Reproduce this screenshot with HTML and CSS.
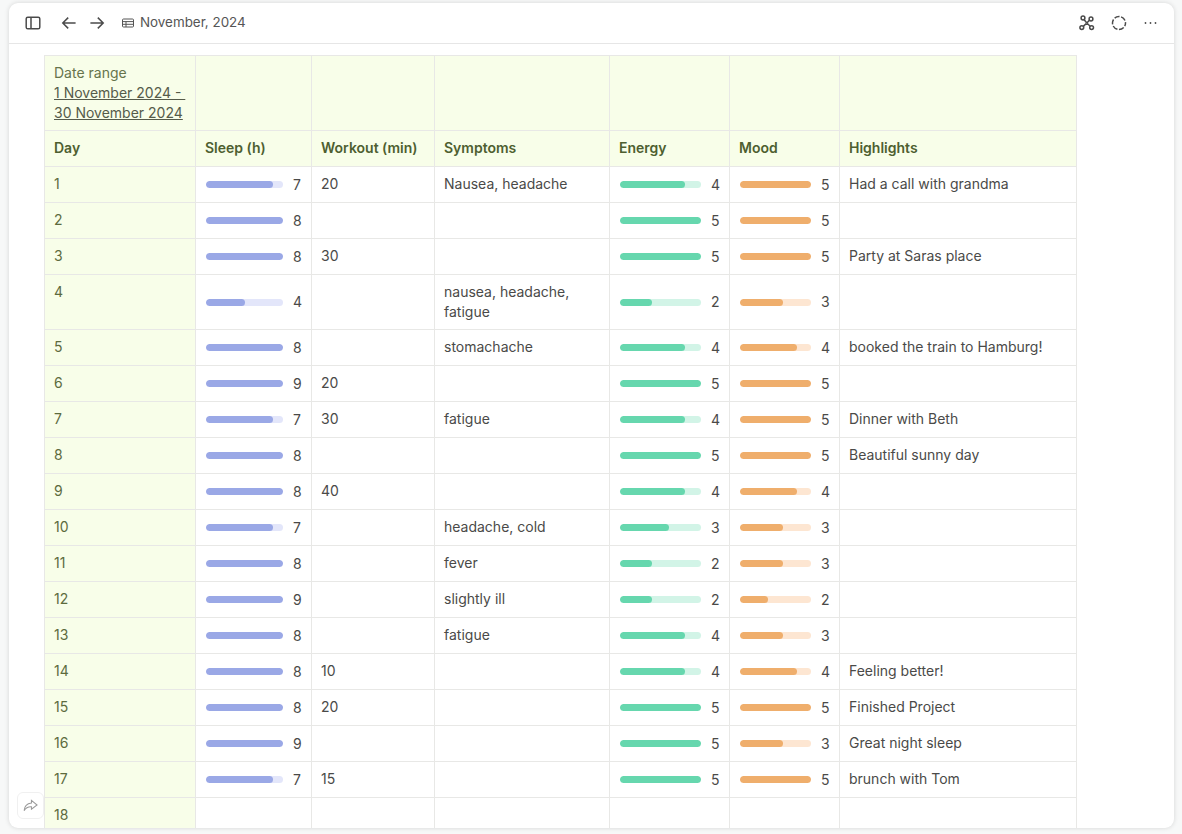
FILE: index.html
```html
<!DOCTYPE html>
<html lang="en">
<head>
  <meta charset="UTF-8">
  <title>November, 2024</title>
  <link rel="stylesheet" href="styles.css">
</head>
<body>
  <div class="card">
    <!-- Top bar -->
    <div class="topbar">
      <div class="topbar-left">
        <svg class="icon side-icon" viewBox="0 0 16 16"><rect x="1.2" y="2.2" width="13.6" height="11.6" rx="1.6"/><path d="M6 2.2v11.6"/></svg>
        <svg class="icon back-icon" viewBox="0 0 16 16"><path d="M14.6 8H1.8M7.2 2.6 1.8 8l5.4 5.4"/></svg>
        <svg class="icon fwd-icon" viewBox="0 0 16 16"><path d="M1.4 8h12.8M8.8 2.6 14.2 8l-5.4 5.4"/></svg>
        <svg class="small-icon" viewBox="0 0 12 10"><rect x="0.5" y="1" width="11" height="8" rx="1"/><path d="M0.5 3.6h11M0.5 6.3h11M4 3.6V9"/></svg>
        <span class="page-title">November, 2024</span>
      </div>
      <div class="topbar-right">
        <svg class="icon" viewBox="0 0 16 16"><circle cx="4" cy="3" r="1.9"/><circle cx="12" cy="4" r="1.9"/><circle cx="2.8" cy="12.6" r="1.9"/><circle cx="12.6" cy="12.6" r="1.9"/><path d="M5 4.6 7.8 8M10.4 5.2 7.8 8M4.3 11.4 7.8 8M11.2 11.2 7.8 8"/></svg>
        <svg class="icon" viewBox="0 0 16 16"><circle cx="8" cy="8" r="6.5" stroke-dasharray="5.2 1.6" stroke-dashoffset="2"/></svg>
        <svg class="icon" viewBox="0 0 16 16"><circle class="dot" cx="2.5" cy="8" r="0.9"/><circle class="dot" cx="7.5" cy="8" r="0.9"/><circle class="dot" cx="12.5" cy="8" r="0.9"/></svg>
      </div>
    </div>

    <!-- Tracker table -->
    <div class="content">
      <table class="tracker">
        <colgroup>
          <col class="col-day"><col class="col-sleep"><col class="col-workout"><col class="col-symptoms"><col class="col-energy"><col class="col-mood"><col class="col-high">
        </colgroup>
        <tr class="head">
          <td>Date range<br><span class="range">1 November 2024 -&nbsp;<br>30 November 2024</span></td>
          <td></td><td></td><td></td><td></td><td></td><td></td>
        </tr>
        <tr class="head titles">
          <td>Day</td><td>Sleep (h)</td><td>Workout (min)</td><td>Symptoms</td><td>Energy</td><td>Mood</td><td>Highlights</td>
        </tr>
        <tr>
          <td class="day">1</td>
          <td class="mid"><div class="meter sleep"><div class="track"><div class="fill" style="width:87.5%"></div></div><span>7</span></div></td>
          <td>20</td><td>Nausea, headache</td>
          <td class="mid"><div class="meter energy"><div class="track"><div class="fill" style="width:80%"></div></div><span>4</span></div></td>
          <td class="mid"><div class="meter mood"><div class="track"><div class="fill" style="width:100%"></div></div><span>5</span></div></td>
          <td>Had a call with grandma</td>
        </tr>
        <tr>
          <td class="day">2</td>
          <td class="mid"><div class="meter sleep"><div class="track"><div class="fill" style="width:100%"></div></div><span>8</span></div></td>
          <td></td><td></td>
          <td class="mid"><div class="meter energy"><div class="track"><div class="fill" style="width:100%"></div></div><span>5</span></div></td>
          <td class="mid"><div class="meter mood"><div class="track"><div class="fill" style="width:100%"></div></div><span>5</span></div></td>
          <td></td>
        </tr>
        <tr>
          <td class="day">3</td>
          <td class="mid"><div class="meter sleep"><div class="track"><div class="fill" style="width:100%"></div></div><span>8</span></div></td>
          <td>30</td><td></td>
          <td class="mid"><div class="meter energy"><div class="track"><div class="fill" style="width:100%"></div></div><span>5</span></div></td>
          <td class="mid"><div class="meter mood"><div class="track"><div class="fill" style="width:100%"></div></div><span>5</span></div></td>
          <td>Party at Saras place</td>
        </tr>
        <tr>
          <td class="day">4</td>
          <td class="mid"><div class="meter sleep"><div class="track"><div class="fill" style="width:50%"></div></div><span>4</span></div></td>
          <td></td><td>nausea, headache, fatigue</td>
          <td class="mid"><div class="meter energy"><div class="track"><div class="fill" style="width:40%"></div></div><span>2</span></div></td>
          <td class="mid"><div class="meter mood"><div class="track"><div class="fill" style="width:60%"></div></div><span>3</span></div></td>
          <td></td>
        </tr>
        <tr>
          <td class="day">5</td>
          <td class="mid"><div class="meter sleep"><div class="track"><div class="fill" style="width:100%"></div></div><span>8</span></div></td>
          <td></td><td>stomachache</td>
          <td class="mid"><div class="meter energy"><div class="track"><div class="fill" style="width:80%"></div></div><span>4</span></div></td>
          <td class="mid"><div class="meter mood"><div class="track"><div class="fill" style="width:80%"></div></div><span>4</span></div></td>
          <td>booked the train to Hamburg!</td>
        </tr>
        <tr>
          <td class="day">6</td>
          <td class="mid"><div class="meter sleep"><div class="track"><div class="fill" style="width:100%"></div></div><span>9</span></div></td>
          <td>20</td><td></td>
          <td class="mid"><div class="meter energy"><div class="track"><div class="fill" style="width:100%"></div></div><span>5</span></div></td>
          <td class="mid"><div class="meter mood"><div class="track"><div class="fill" style="width:100%"></div></div><span>5</span></div></td>
          <td></td>
        </tr>
        <tr>
          <td class="day">7</td>
          <td class="mid"><div class="meter sleep"><div class="track"><div class="fill" style="width:87.5%"></div></div><span>7</span></div></td>
          <td>30</td><td>fatigue</td>
          <td class="mid"><div class="meter energy"><div class="track"><div class="fill" style="width:80%"></div></div><span>4</span></div></td>
          <td class="mid"><div class="meter mood"><div class="track"><div class="fill" style="width:100%"></div></div><span>5</span></div></td>
          <td>Dinner with Beth</td>
        </tr>
        <tr>
          <td class="day">8</td>
          <td class="mid"><div class="meter sleep"><div class="track"><div class="fill" style="width:100%"></div></div><span>8</span></div></td>
          <td></td><td></td>
          <td class="mid"><div class="meter energy"><div class="track"><div class="fill" style="width:100%"></div></div><span>5</span></div></td>
          <td class="mid"><div class="meter mood"><div class="track"><div class="fill" style="width:100%"></div></div><span>5</span></div></td>
          <td>Beautiful sunny day</td>
        </tr>
        <tr>
          <td class="day">9</td>
          <td class="mid"><div class="meter sleep"><div class="track"><div class="fill" style="width:100%"></div></div><span>8</span></div></td>
          <td>40</td><td></td>
          <td class="mid"><div class="meter energy"><div class="track"><div class="fill" style="width:80%"></div></div><span>4</span></div></td>
          <td class="mid"><div class="meter mood"><div class="track"><div class="fill" style="width:80%"></div></div><span>4</span></div></td>
          <td></td>
        </tr>
        <tr>
          <td class="day">10</td>
          <td class="mid"><div class="meter sleep"><div class="track"><div class="fill" style="width:87.5%"></div></div><span>7</span></div></td>
          <td></td><td>headache, cold</td>
          <td class="mid"><div class="meter energy"><div class="track"><div class="fill" style="width:60%"></div></div><span>3</span></div></td>
          <td class="mid"><div class="meter mood"><div class="track"><div class="fill" style="width:60%"></div></div><span>3</span></div></td>
          <td></td>
        </tr>
        <tr>
          <td class="day">11</td>
          <td class="mid"><div class="meter sleep"><div class="track"><div class="fill" style="width:100%"></div></div><span>8</span></div></td>
          <td></td><td>fever</td>
          <td class="mid"><div class="meter energy"><div class="track"><div class="fill" style="width:40%"></div></div><span>2</span></div></td>
          <td class="mid"><div class="meter mood"><div class="track"><div class="fill" style="width:60%"></div></div><span>3</span></div></td>
          <td></td>
        </tr>
        <tr>
          <td class="day">12</td>
          <td class="mid"><div class="meter sleep"><div class="track"><div class="fill" style="width:100%"></div></div><span>9</span></div></td>
          <td></td><td>slightly ill</td>
          <td class="mid"><div class="meter energy"><div class="track"><div class="fill" style="width:40%"></div></div><span>2</span></div></td>
          <td class="mid"><div class="meter mood"><div class="track"><div class="fill" style="width:40%"></div></div><span>2</span></div></td>
          <td></td>
        </tr>
        <tr>
          <td class="day">13</td>
          <td class="mid"><div class="meter sleep"><div class="track"><div class="fill" style="width:100%"></div></div><span>8</span></div></td>
          <td></td><td>fatigue</td>
          <td class="mid"><div class="meter energy"><div class="track"><div class="fill" style="width:80%"></div></div><span>4</span></div></td>
          <td class="mid"><div class="meter mood"><div class="track"><div class="fill" style="width:60%"></div></div><span>3</span></div></td>
          <td></td>
        </tr>
        <tr>
          <td class="day">14</td>
          <td class="mid"><div class="meter sleep"><div class="track"><div class="fill" style="width:100%"></div></div><span>8</span></div></td>
          <td>10</td><td></td>
          <td class="mid"><div class="meter energy"><div class="track"><div class="fill" style="width:80%"></div></div><span>4</span></div></td>
          <td class="mid"><div class="meter mood"><div class="track"><div class="fill" style="width:80%"></div></div><span>4</span></div></td>
          <td>Feeling better!</td>
        </tr>
        <tr>
          <td class="day">15</td>
          <td class="mid"><div class="meter sleep"><div class="track"><div class="fill" style="width:100%"></div></div><span>8</span></div></td>
          <td>20</td><td></td>
          <td class="mid"><div class="meter energy"><div class="track"><div class="fill" style="width:100%"></div></div><span>5</span></div></td>
          <td class="mid"><div class="meter mood"><div class="track"><div class="fill" style="width:100%"></div></div><span>5</span></div></td>
          <td>Finished Project</td>
        </tr>
        <tr>
          <td class="day">16</td>
          <td class="mid"><div class="meter sleep"><div class="track"><div class="fill" style="width:100%"></div></div><span>9</span></div></td>
          <td></td><td></td>
          <td class="mid"><div class="meter energy"><div class="track"><div class="fill" style="width:100%"></div></div><span>5</span></div></td>
          <td class="mid"><div class="meter mood"><div class="track"><div class="fill" style="width:60%"></div></div><span>3</span></div></td>
          <td>Great night sleep</td>
        </tr>
        <tr>
          <td class="day">17</td>
          <td class="mid"><div class="meter sleep"><div class="track"><div class="fill" style="width:87.5%"></div></div><span>7</span></div></td>
          <td>15</td><td></td>
          <td class="mid"><div class="meter energy"><div class="track"><div class="fill" style="width:100%"></div></div><span>5</span></div></td>
          <td class="mid"><div class="meter mood"><div class="track"><div class="fill" style="width:100%"></div></div><span>5</span></div></td>
          <td>brunch with Tom</td>
        </tr>
        <tr>
          <td class="day">18</td>
          <td></td><td></td><td></td><td></td><td></td><td></td>
        </tr>
      </table>
    </div>

    <!-- Share button over the table -->
    <div class="share">
      <svg viewBox="0 0 16 16"><path d="M9 2.5 15 7.5 9 12V9.4C5.5 9.2 3 10.5 1.2 13.5 1.5 9 4.5 6 9 5.4Z"/></svg>
    </div>
  </div>
</body>
</html>
```

FILE: styles.css
```css
* {
  margin: 0;
  padding: 0;
  box-sizing: border-box;
}
html, body {
  height: 834px;
  overflow: hidden;
}
body {
  font-family: "Inter", "Liberation Sans", sans-serif;
  font-size: 14px;
  line-height: 20px;
  color: #4a4a48;
  background-color: #f7f8f8;
  padding: 3px 8px 6px 9px;
}
.card {
  position: relative;
  height: 825px;
  display: flex;
  flex-direction: column;
  background-color: #fff;
  border-radius: 9px;
  box-shadow: 0 0 5px rgba(0, 0, 0, 0.14);
  overflow: hidden;
}
/* Top bar */
.topbar {
  flex: none;
  height: 41px;
  display: flex;
  align-items: center;
  justify-content: space-between;
  padding: 0 15px 0 16px;
  border-bottom: 1px solid #e6e6e6;
}
.topbar-left, .topbar-right {
  display: flex;
  align-items: center;
}
.topbar-right {
  gap: 16px;
}
.icon {
  width: 16px;
  height: 16px;
  fill: none;
  stroke: #4b4b4b;
  stroke-width: 1.5;
}
.icon .dot {
  fill: #4b4b4b;
  stroke: none;
}
.back-icon {
  margin-left: 20px;
}
.fwd-icon {
  margin-left: 12px;
}
.small-icon {
  width: 12px;
  height: 10px;
  margin-left: 17px;
  fill: none;
  stroke: #555;
  stroke-width: 1;
}
.page-title {
  margin-left: 6px;
  margin-bottom: 2px;
  font-size: 13.4px;
  color: #555;
}
/* Table */
.content {
  flex: 1;
  padding: 11px 0 0 35px;
  overflow: hidden;
}
.tracker {
  table-layout: fixed;
  border-collapse: collapse;
  width: 1032px;
}
.col-day { width: 151px; }
.col-sleep { width: 116px; }
.col-workout { width: 123px; }
.col-symptoms { width: 175px; }
.col-energy { width: 120px; }
.col-mood { width: 110px; }
.col-high { width: 237px; }
.tracker td {
  height: 36px;
  padding: 7px 10px 7px 9px;
  vertical-align: top;
  border: 1px solid #e8e8e6;
}
.tracker td.mid {
  padding-left: 10px;
  padding-right: 11px;
  vertical-align: middle;
}
.tracker .day {
  background-color: #f8fee9;
  color: #5d6b3e;
}
.head td {
  background-color: #f8fee9;
  color: #66744c;
}
.range {
  color: #555b4a;
  text-decoration: underline;
  white-space: nowrap;
}
.head.titles td {
  padding-top: 6px;
  padding-bottom: 8px;
  font-weight: 600;
  color: #4e5f30;
  vertical-align: middle;
}
/* Progress bars */
.meter {
  display: flex;
  align-items: center;
  gap: 10px;
}
.meter .track {
  flex: 1;
  height: 7px;
  border-radius: 4px;
  overflow: hidden;
}
.meter .fill {
  height: 100%;
  border-radius: 4px;
}
.meter span {
  flex: none;
  width: 7px;
  text-align: right;
}
.sleep .track { background-color: #e3e6fa; }
.sleep .fill { background-color: #9aa8e6; }
.energy .track { background-color: #d2f4e7; }
.energy .fill { background-color: #66d7ae; }
.mood .track { background-color: #fde6d2; }
.mood .fill { background-color: #efae6c; }
/* Share button */
.share {
  position: absolute;
  left: 8px;
  top: 789px;
  width: 27px;
  height: 27px;
  display: flex;
  align-items: center;
  justify-content: center;
  background-color: #fff;
  border: 1px solid #f0f0f0;
  border-radius: 6px;
}
.share svg {
  width: 15px;
  height: 15px;
  fill: none;
  stroke: #9a9a9a;
  stroke-width: 1.1;
}
```
